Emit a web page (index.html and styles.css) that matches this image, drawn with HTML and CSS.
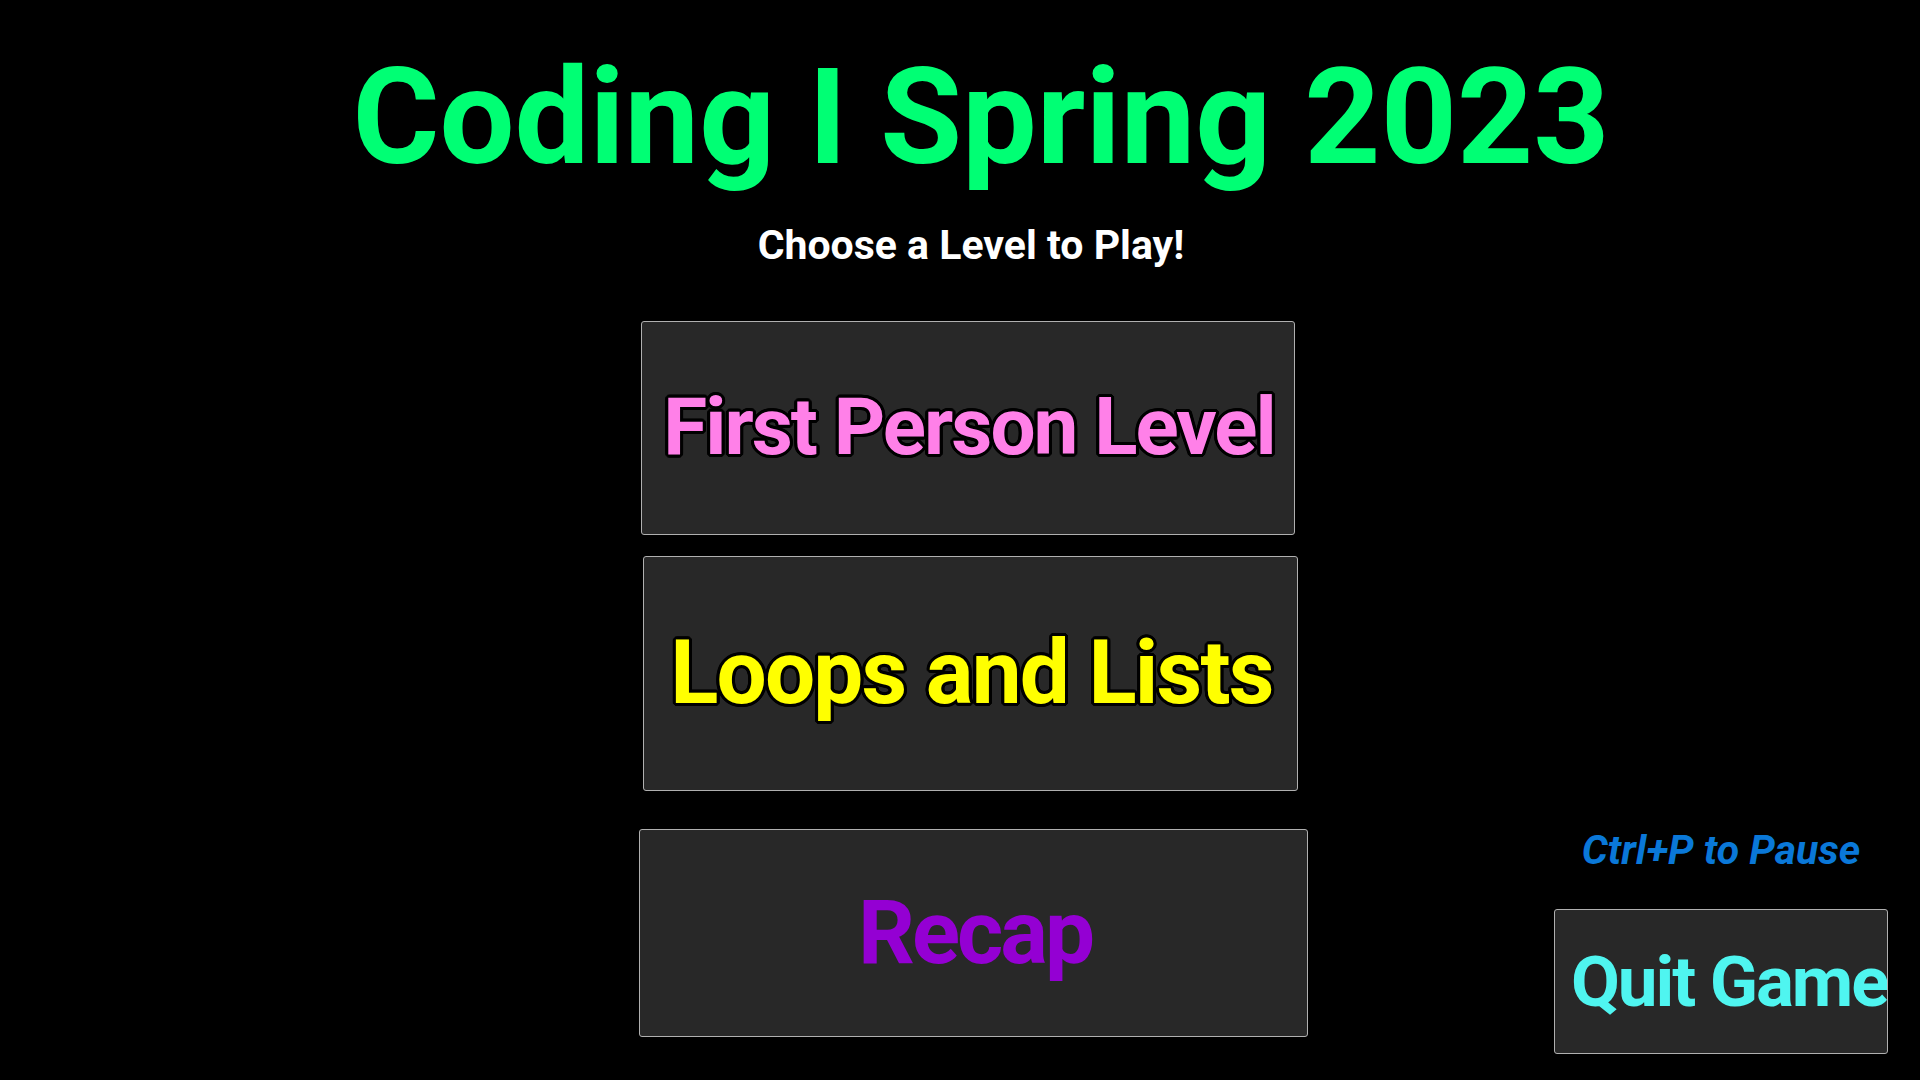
FILE: index.html
```html
<!DOCTYPE html>
<html lang="en">
<head>
<meta charset="utf-8">
<title>Coding I Spring 2023</title>
<link rel="stylesheet" href="styles.css">
</head>
<body>
<div class="screen">
  <h1 class="title">Coding I Spring 2023</h1>
  <p class="subtitle">Choose a Level to Play!</p>
  <div class="lower">
    <div class="levels">
      <button class="level level-first"><span class="label outlined pink">First Person Level</span></button>
      <button class="level level-loops"><span class="label outlined yellow">Loops and Lists</span></button>
      <button class="level level-recap"><span class="label purple">Recap</span></button>
    </div>
    <aside class="hud">
      <p class="pause-hint">Ctrl+P to Pause</p>
      <button class="level quit"><span class="label cyan">Quit Game</span></button>
    </aside>
  </div>
</div>
</body>
</html>
```

FILE: styles.css
```css
html, body {
  margin: 0;
  padding: 0;
  background: #000;
}

.screen {
  width: 1920px;
  height: 1080px;
  background: #000;
  display: flex;
  flex-direction: column;
  font-family: Roboto, "Liberation Sans", sans-serif;
  font-weight: 700;
  overflow: hidden;
}

.title {
  margin: 0;
  padding: 40px 0 0 42px;
  font-size: 133px;
  line-height: 156px;
  font-weight: 700;
  color: #00ff74;
  text-align: center;
  white-space: nowrap;
}

.subtitle {
  margin: 25px 0 0 0;
  padding-left: 22px;
  font-size: 41px;
  line-height: 1.172;
  color: #fff;
  text-align: center;
}

.lower {
  flex: 1;
  display: flex;
  align-items: stretch;
  padding-top: 52px;
}

.levels {
  display: flex;
  flex-direction: column;
  align-items: flex-start;
}

.level {
  box-sizing: border-box;
  display: flex;
  align-items: center;
  justify-content: center;
  padding: 0;
  margin: 0;
  background: #282828;
  border: 1px solid #b0b0b0;
  border-radius: 3px;
  font-family: inherit;
  font-weight: 700;
  overflow: hidden;
  white-space: nowrap;
}

.label {
  display: block;
  line-height: 1.172;
}

.outlined {
  text-shadow:
    3px 0 0 #000, -3px 0 0 #000, 0 3px 0 #000, 0 -3px 0 #000,
    2px 2px 0 #000, -2px 2px 0 #000, 2px -2px 0 #000, -2px -2px 0 #000,
    3px 1px 0 #000, -3px 1px 0 #000, 3px -1px 0 #000, -3px -1px 0 #000,
    1px 3px 0 #000, -1px 3px 0 #000, 1px -3px 0 #000, -1px -3px 0 #000;
}

.level-first {
  margin-left: 641px;
  width: 654px;
  height: 214px;
}

.level-loops {
  margin-left: 643px;
  margin-top: 21px;
  width: 655px;
  height: 235px;
}

.level-recap {
  margin-left: 639px;
  margin-top: 38px;
  width: 669px;
  height: 208px;
}

.pink {
  color: #ff80e8;
  font-size: 80px;
  letter-spacing: -2px;
  margin-right: -2px;
}

.yellow {
  color: #ffff00;
  font-size: 89px;
  letter-spacing: -1.8px;
  margin-right: -1.8px;
}

.purple {
  color: #9400d3;
  font-size: 89px;
  letter-spacing: -3px;
  margin-right: -3px;
}

.hud {
  margin-left: auto;
  margin-right: 32px;
  width: 334px;
  display: flex;
  flex-direction: column;
  justify-content: flex-end;
  align-items: center;
  padding-bottom: 26px;
}

.pause-hint {
  margin: 0 0 35px 0;
  font-size: 41px;
  line-height: 1.172;
  font-style: italic;
  color: #0a78d8;
  white-space: nowrap;
}

.quit {
  width: 334px;
  height: 145px;
  justify-content: flex-start;
  padding-left: 16px;
}

.cyan {
  color: #4ff5f0;
  font-size: 71px;
  letter-spacing: -2.1px;
}
```
